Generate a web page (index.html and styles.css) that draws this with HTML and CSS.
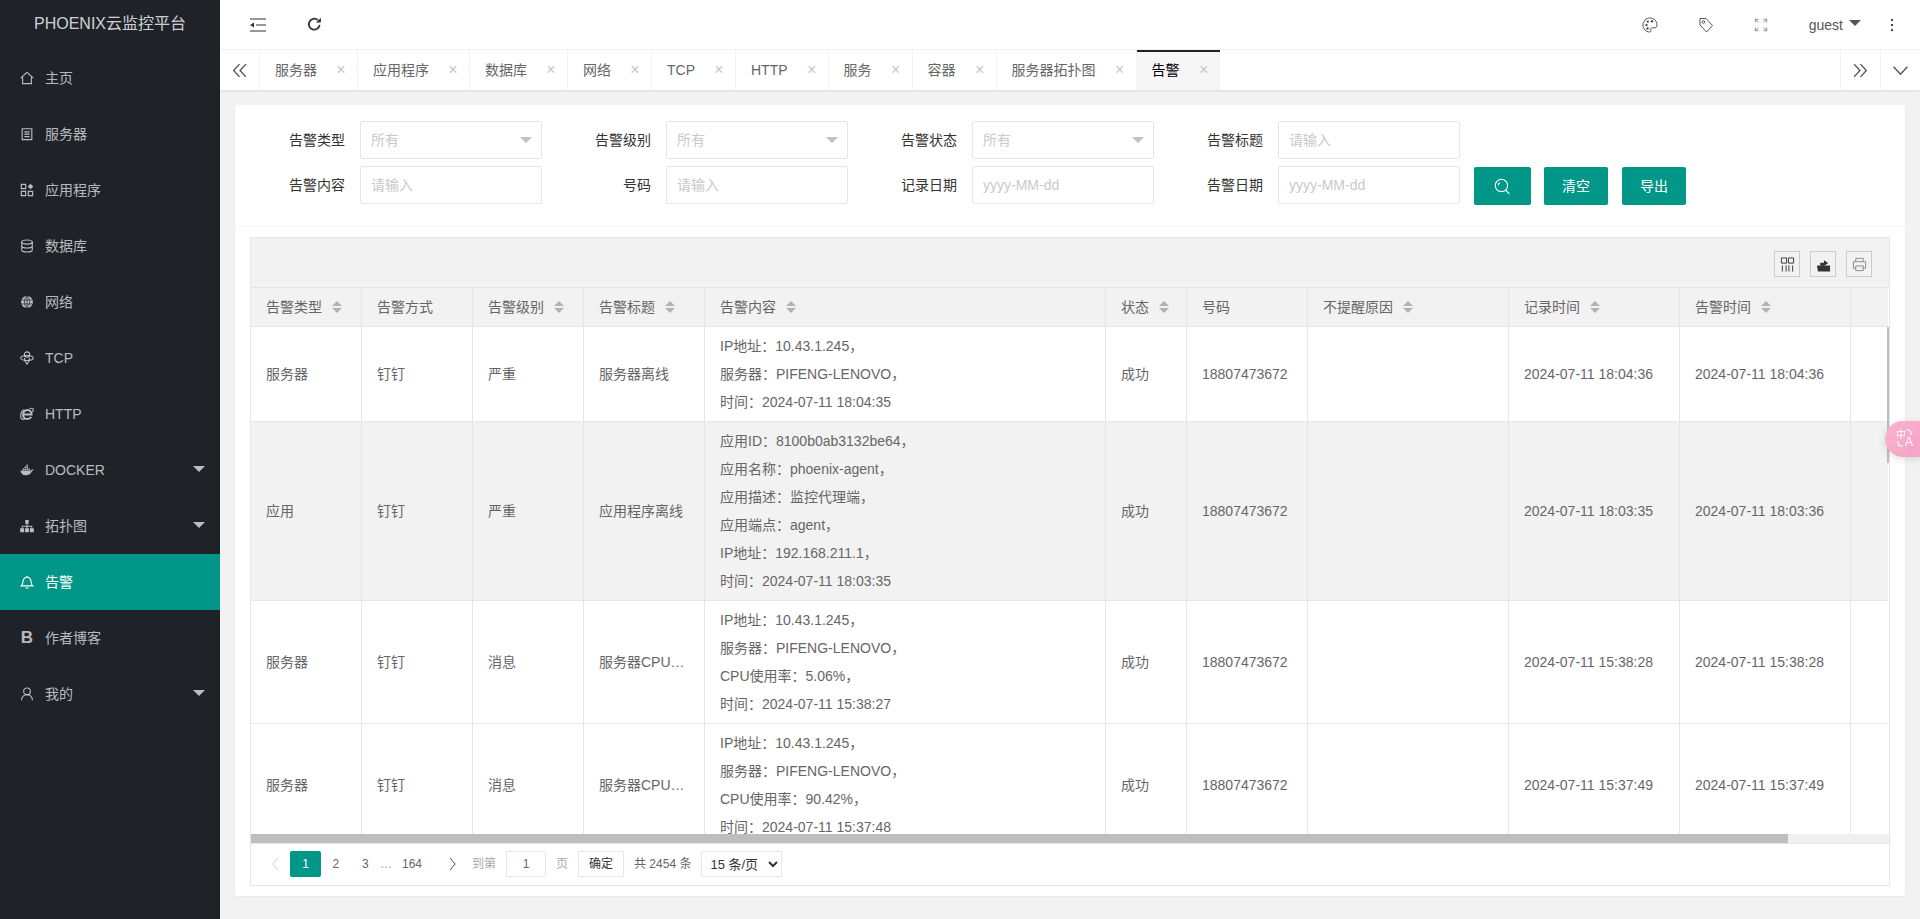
FILE: index.html
```html
<!DOCTYPE html>
<html lang="zh-CN">
<head>
<meta charset="utf-8">
<title>PHOENIX云监控平台</title>
<link rel="stylesheet" href="styles.css">
</head>
<body>
<div class="app">
  <aside class="side">
    <div class="logo">PHOENIX云监控平台</div>
    <nav class="menu">
      <a class="item"><svg class="ico" viewBox="0 0 16 16"><path d="M.8 8.2 8 1.5l7.2 6.7M3 7v7.5h10V7"/></svg><span>主页</span></a>
      <a class="item"><svg class="ico" viewBox="0 0 16 16"><path d="M2.500 2h11v12.500h-11zM5 5.500h6M5 8.200h6M5 11h6"/></svg><span>服务器</span></a>
      <a class="item"><svg class="ico" viewBox="0 0 16 16"><path d="M1.500 1.500h5v5h-5zM1.500 9.500h5v5h-5zM9.500 9.500h5v5h-5z"/><path class="fill" d="m12 .8 3.200 3.200-3.200 3.200L8.800 4z"/></svg><span>应用程序</span></a>
      <a class="item"><svg class="ico" viewBox="0 0 16 16"><ellipse cx="8" cy="3.500" rx="6" ry="2.300"/><path d="M2 3.500v9c0 1.300 2.700 2.300 6 2.300s6-1 6-2.300v-9M2 8c0 1.300 2.700 2.300 6 2.300s6-1 6-2.300"/></svg><span>数据库</span></a>
      <a class="item"><svg class="ico" viewBox="0 0 16 16"><circle class="fill" cx="8" cy="8" r="6.800"/><path class="cut" d="M1.500 5.800h13M1.500 10.200h13M8 1.200v13.600M8 1.200C4 5 4 11 8 14.800M8 1.200c4 3.800 4 9.800 0 13.600"/></svg><span>网络</span></a>
      <a class="item"><svg class="ico" viewBox="0 0 16 16"><ellipse cx="8" cy="8" rx="7.200" ry="2.800"/><circle cx="8" cy="4" r="3"/><path d="M5 8c0 3 1.500 5 3 7 1.500-2 3-4 3-7"/></svg><span>TCP</span></a>
      <a class="item"><svg class="ico" viewBox="0 0 16 16"><path class="bold" d="M3.800 8.600h9.400C13.200 5.500 11 3.500 8.500 3.500 5.500 3.500 3.500 6 3.500 8.800c0 3 2.300 5 5 5 2 0 3.500-1 4.300-2.500"/><path d="M5 2.800C2.500 3.800.6 7 .8 11c.2 3.500 3 4 6 2M11 2c2-1 4-.8 4.200 1 .1 1-.4 2-1 3"/></svg><span>HTTP</span></a>
      <a class="item"><svg class="ico" viewBox="0 0 16 16"><path class="fill" d="M.5 8.500h12c.5-1 1.500-1.500 3-1-.3 1-1 1.700-2 1.800-1 3-3.500 4.700-7 4.700-3.500 0-5.500-2-6-5.500zM3 6.300h1.700V8H3zM5.200 6.300h1.700V8H5.200zM7.400 6.300h1.700V8H7.400zM5.200 4.100h1.700v1.700H5.200zM7.400 4.100h1.700v1.700H7.400zM7.400 1.900h1.700v1.700H7.400zM9.600 6.300h1.700V8H9.600z"/></svg><span>DOCKER</span><i class="caret"></i></a>
      <a class="item"><svg class="ico" viewBox="0 0 16 16"><path class="fill" d="M6 1h4v4.500H8.600v2.200h5.400v3h1.800V15h-4.500v-4.300H13V8.800H8.600v1.900H10.200V15H5.800v-4.300h1.600V8.800H3v1.900h1.700V15H.2v-4.300H2V7.700h5.400V5.500H6z"/></svg><span>拓扑图</span><i class="caret"></i></a>
      <a class="item on"><svg class="ico" viewBox="0 0 16 16"><path d="M1.500 12.500h13c-1.300-1-1.800-2-1.800-4.500 0-3-2-5.500-4.700-5.500S3.300 5 3.300 8c0 2.500-.5 3.500-1.800 4.500zM6.300 14.800h3.400M8 1v1.500"/></svg><span>告警</span></a>
      <a class="item"><b class="ico-b">B</b><span>作者博客</span></a>
      <a class="item"><svg class="ico" viewBox="0 0 16 16"><circle cx="8" cy="5" r="3.800"/><path d="M1.800 15c0-4 2.500-6.200 6.200-6.200s6.200 2.200 6.200 6.200"/></svg><span>我的</span><i class="caret"></i></a>
    </nav>
  </aside>

  <div class="body">
    <header class="top">
      <svg class="tool tool-menu" viewBox="0 0 16 14"><path d="M0 1h16M6 7h10M0 13h16"/><path class="solid" d="M4 4.500v5L0 7z"/></svg>
      <svg class="tool tool-refresh" viewBox="0 0 16 16"><path d="M13.500 8.500A5.800 5.800 0 1 1 11.500 3.200"/><path class="solid" d="M9.500 5.800h5.300V.8z"/></svg>
      <div class="top-right">
        <svg class="tr-ico" viewBox="0 0 16 16"><path d="M8 1C4 1 1 4 1 8s3 7 6.500 7c1.500 0 1.700-1 1.200-2-.6-1.200.2-2.200 1.500-2.200H13c1.300 0 2-1 2-2.800C15 4 12 1 8 1z"/><circle class="solid" cx="4.500" cy="8" r="1.200"/><circle class="solid" cx="5.800" cy="4.600" r="1.200"/><circle class="solid" cx="10" cy="4.300" r="1.200"/><circle class="solid" cx="5.500" cy="11.500" r="1.200"/></svg>
        <svg class="tr-ico" viewBox="0 0 16 16"><path d="M2 1.500h6l6.500 7-6 6.500L2 8z"/><circle cx="5.500" cy="5" r="1.300"/></svg>
        <svg class="tr-ico tr-full" viewBox="0 0 16 16"><path d="M1.500 5V1.500H5M14.500 5V1.500H11M1.500 11v3.500H5M14.500 11v3.500H11M1.500 1.500l3.500 3.500M14.500 1.500 11 5M1.500 14.500 5 11M14.500 14.500 11 11"/></svg>
        <span class="guest">guest<i class="g-caret"></i></span>
        <span class="dots"><i></i><i></i><i></i></span>
      </div>
    </header>

    <div class="tabs">
      <button class="tab-btn tab-prev"><svg viewBox="0 0 16 16"><path d="M8 2 2.500 8 8 14M14 2 8.500 8l5.500 6"/></svg></button>
      <ul class="tab-list">
        <li>服务器<i class="x">×</i></li>
        <li>应用程序<i class="x">×</i></li>
        <li>数据库<i class="x">×</i></li>
        <li>网络<i class="x">×</i></li>
        <li>TCP<i class="x">×</i></li>
        <li>HTTP<i class="x">×</i></li>
        <li>服务<i class="x">×</i></li>
        <li>容器<i class="x">×</i></li>
        <li>服务器拓扑图<i class="x">×</i></li>
        <li class="cur">告警<i class="x">×</i></li>
      </ul>
      <button class="tab-btn tab-next"><svg viewBox="0 0 16 16"><path d="m2 2 5.500 6L2 14M8 2l5.500 6L8 14"/></svg></button>
      <button class="tab-btn tab-down"><svg viewBox="0 0 16 16"><path d="m1.500 4.500 6.500 7 6.500-7"/></svg></button>
    </div>

    <main class="main">
      <section class="card">
        <form class="filter">
          <div class="f-row">
            <div class="field"><label>告警类型</label><div class="ctrl"><input placeholder="所有" readonly><i class="sel"></i></div></div>
            <div class="field"><label>告警级别</label><div class="ctrl"><input placeholder="所有" readonly><i class="sel"></i></div></div>
            <div class="field"><label>告警状态</label><div class="ctrl"><input placeholder="所有" readonly><i class="sel"></i></div></div>
            <div class="field"><label>告警标题</label><div class="ctrl"><input placeholder="请输入"></div></div>
          </div>
          <div class="f-row">
            <div class="field"><label>告警内容</label><div class="ctrl"><input placeholder="请输入"></div></div>
            <div class="field"><label>号码</label><div class="ctrl"><input placeholder="请输入"></div></div>
            <div class="field"><label>记录日期</label><div class="ctrl"><input placeholder="yyyy-MM-dd"></div></div>
            <div class="field"><label>告警日期</label><div class="ctrl"><input placeholder="yyyy-MM-dd"></div></div>
            <div class="btns">
              <button type="button" class="btn btn-s"><svg viewBox="0 0 16 16"><circle cx="7" cy="7" r="5.800"/><path d="m11 11.500 3.500 3.500M4 7a3 3 0 0 1 1.500-2.600"/></svg></button>
              <button type="button" class="btn">清空</button>
              <button type="button" class="btn">导出</button>
            </div>
          </div>
        </form>

        <div class="grid">
          <div class="g-tool">
            <span class="g-ico"><svg viewBox="0 0 16 16"><path d="M1.500 1h5.500v5.500H1.500zM9 1h5.500v5.500H9zM2.500 9v6.500M6.500 9v6.500M9.500 9v6.500M13.500 9v6.500"/></svg></span>
            <span class="g-ico"><svg viewBox="0 0 16 16"><path class="solid" d="M1 9h14v6.500H2z"/><path class="solid" d="M4.500 9V6h4V3.500L13 6.500 8.500 9.500z"/></svg></span>
            <span class="g-ico g-print"><svg viewBox="0 0 16 16"><path d="M4 5V1.500h8V5M4 12H1.500V5h13v7H12M4 9.500h8v5H4z"/></svg></span>
          </div>
          <div class="g-view">
            <table class="tb">
              <thead>
                <tr>
                  <th>告警类型<i class="sort"></i></th><th>告警方式</th><th>告警级别<i class="sort"></i></th><th>告警标题<i class="sort"></i></th><th>告警内容<i class="sort"></i></th><th>状态<i class="sort"></i></th><th>号码</th><th>不提醒原因<i class="sort"></i></th><th>记录时间<i class="sort"></i></th><th>告警时间<i class="sort"></i></th><th></th>
                </tr>
              </thead>
              <tbody>
                <tr>
                  <td>服务器</td><td>钉钉</td><td>严重</td><td>服务器离线</td>
                  <td>IP地址：10.43.1.245，<br>服务器：PIFENG-LENOVO，<br>时间：2024-07-11 18:04:35</td>
                  <td>成功</td><td>18807473672</td><td></td><td>2024-07-11 18:04:36</td><td>2024-07-11 18:04:36</td><td></td>
                </tr>
                <tr class="hover">
                  <td>应用</td><td>钉钉</td><td>严重</td><td>应用程序离线</td>
                  <td>应用ID：8100b0ab3132be64，<br>应用名称：phoenix-agent，<br>应用描述：监控代理端，<br>应用端点：agent，<br>IP地址：192.168.211.1，<br>时间：2024-07-11 18:03:35</td>
                  <td>成功</td><td>18807473672</td><td></td><td>2024-07-11 18:03:35</td><td>2024-07-11 18:03:36</td><td></td>
                </tr>
                <tr>
                  <td>服务器</td><td>钉钉</td><td>消息</td><td>服务器CPU过载</td>
                  <td>IP地址：10.43.1.245，<br>服务器：PIFENG-LENOVO，<br>CPU使用率：5.06%，<br>时间：2024-07-11 15:38:27</td>
                  <td>成功</td><td>18807473672</td><td></td><td>2024-07-11 15:38:28</td><td>2024-07-11 15:38:28</td><td></td>
                </tr>
                <tr>
                  <td>服务器</td><td>钉钉</td><td>消息</td><td>服务器CPU过载</td>
                  <td>IP地址：10.43.1.245，<br>服务器：PIFENG-LENOVO，<br>CPU使用率：90.42%，<br>时间：2024-07-11 15:37:48</td>
                  <td>成功</td><td>18807473672</td><td></td><td>2024-07-11 15:37:49</td><td>2024-07-11 15:37:49</td><td></td>
                </tr>
              </tbody>
            </table>
            <i class="v-thumb"></i>
          </div>
          <div class="h-track"><i class="h-thumb"></i></div>
          <div class="pager">
            <span class="p-arrow p-prev"><svg viewBox="0 0 10 16"><path d="M8 1 2 8l6 7"/></svg></span>
            <span class="p-cur">1</span>
            <span class="p-n p-n2">2</span>
            <span class="p-n p-n3">3</span>
            <span class="p-dots">…</span>
            <span class="p-n p-last">164</span>
            <span class="p-arrow p-next"><svg viewBox="0 0 10 16"><path d="m2 1 6 7-6 7"/></svg></span>
            <span class="p-mute">到第</span>
            <input class="p-input" value="1">
            <span class="p-mute p-ye">页</span>
            <button type="button" class="p-ok">确定</button>
            <span class="p-total">共 2454 条</span>
            <select class="p-size"><option>15 条/页</option></select>
          </div>
        </div>
      </section>
    </main>
  </div>
</div>
<div class="trans"><svg viewBox="0 0 20 20"><path d="M11 2h2c1.500 0 3 1.500 3 3v2M3 13v2c0 1.500 1 3 3 3h2"/></svg><span class="t-zh">中</span><span class="t-a">A</span></div>
</body>
</html>
```

FILE: styles.css
```css
* { box-sizing: border-box; }
html, body { margin: 0; height: 100%; overflow: hidden; }
body { font: 14px/20px "Liberation Sans", "Noto Sans CJK SC", sans-serif; color: #666; background: #f2f2f2; }
i { font-style: normal; }
svg { fill: none; stroke: currentColor; stroke-width: 1.2; display: block; }
svg .fill, svg .solid { fill: currentColor; stroke: none; }

.app { display: flex; height: 919px; }

/* sidebar */
.side { width: 220px; flex: none; background: #20222a; color: rgba(255,255,255,.7); }
.logo { height: 50px; line-height: 48px; text-align: center; font-size: 16px; color: rgba(255,255,255,.8); }
.menu { display: flex; flex-direction: column; }
.item { height: 56px; display: flex; align-items: center; padding-left: 20px; position: relative; }
.item.on { background: #009688; color: #fff; }
.item span { margin-left: 11px; }
.ico { width: 14px; height: 14px; flex: none; stroke-width: 1.300; }
.ico .cut { stroke: #20222a; stroke-width: .8; }
.ico .bold { stroke-width: 2.300; }
.ico-b { width: 14px; flex: none; font-size: 17px; font-weight: 700; text-align: center; }
.caret { margin-left: auto; margin-right: 15px; width: 0; height: 0; border: 6px solid transparent; border-top-color: rgba(255,255,255,.7); border-bottom: 0; margin-top: -3px; }

/* header */
.body { flex: 1; min-width: 0; display: flex; flex-direction: column; }
.top { height: 50px; flex: none; background: #fff; display: flex; align-items: center; border-bottom: 1px solid #f0f0f0; color: #333; }
.tool { flex: none; }
.tool-menu { width: 16px; height: 14px; margin-left: 30px; }
.tool-refresh { width: 15px; height: 15px; margin-left: 41px; stroke-width: 1.900; }
.top-right { margin-left: auto; display: flex; align-items: center; color: #555; }
.tr-ico { width: 16px; height: 16px; flex: none; margin-right: 40px; stroke-width: 1; }
.tr-full { width: 14px; height: 14px; color: #777; margin-right: 41px; stroke-width: .9; }
.guest { display: flex; align-items: center; color: #555; }
.g-caret { margin-left: 6px; width: 0; height: 0; border: 6px solid transparent; border-top-color: #555; border-bottom: 0; margin-top: -4px; }
.dots { display: flex; flex-direction: column; gap: 3px; margin: 0 27px 0 30px; }
.dots i { width: 2px; height: 2px; background: #444; }

/* tabs */
.tabs { height: 40px; flex: none; display: flex; background: #fff; box-shadow: 0 1px 2px rgba(0,0,0,.1); position: relative; }
.tab-btn { flex: none; width: 40px; height: 40px; padding: 0; border: 0; background: #fff; display: flex; align-items: center; justify-content: center; color: #555; }
.tab-btn svg { width: 17px; height: 17px; stroke-width: 1.300; }
.tab-prev { border-right: 1px solid #f2f2f2; }
.tab-next { border-left: 1px solid #f2f2f2; }
.tab-down { border-left: 1px solid #f2f2f2; }
.tab-list { flex: 1; display: flex; list-style: none; margin: 0; padding: 0; }
.tab-list li { height: 40px; line-height: 38px; padding: 0 7px 0 15px; display: flex; align-items: center; border-right: 1px solid #f2f2f2; white-space: nowrap; color: #666; }
.tab-list .x { width: 18px; margin-left: 15px; text-align: center; font-size: 16px; color: #c8c8c8; }
.tab-list li.cur { background: #f6f6f6; color: #000; border-top: 2px solid #20222a; border-right: 0; padding-bottom: 2px; }

/* content */
.main { flex: 1; min-height: 0; padding: 15px 15px 23px; }
.card { height: 791px; background: #fff; border-radius: 2px; box-shadow: 0 1px 2px rgba(0,0,0,.05); display: flex; flex-direction: column; }
.filter { height: 122px; flex: none; padding: 16px 0 0 15px; border-bottom: 1px solid #f6f6f6; display: flex; flex-direction: column; gap: 7px; }
.f-row { display: flex; }
.field { display: flex; width: 306px; flex: none; }
.field label { width: 110px; flex: none; padding-right: 15px; line-height: 38px; text-align: right; color: #333; }
.ctrl { width: 182px; height: 38px; flex: none; position: relative; }
.ctrl input { width: 100%; height: 100%; padding: 0 10px; border: 1px solid #e6e6e6; border-radius: 2px; font: inherit; color: #666; background: #fff; outline: 0; }
.ctrl input::placeholder, .p-input::placeholder { color: #c9c9c9; opacity: 1; }
.sel { position: absolute; right: 10px; top: 16px; width: 0; height: 0; border: 6px solid transparent; border-top-color: #c2c2c2; border-bottom: 0; }
.btns { display: flex; gap: 13px; margin-top: 1px; }
.btn { height: 38px; width: 64px; padding: 0; border: 0; border-radius: 2px; background: #009688; color: #fff; font: inherit; display: flex; align-items: center; justify-content: center; }
.btn + .btn + .btn { margin-left: 1px; }
.btn-s { width: 57px; }
.btn-s svg { width: 17px; height: 17px; stroke-width: 1.100; }

/* data grid */
.grid { margin: 10px 15px 0; height: 649px; border: 1px solid #e6e6e6; display: flex; flex-direction: column; }
.g-tool { height: 50px; flex: none; background: #f2f2f2; display: flex; justify-content: flex-end; align-items: flex-start; gap: 10px; padding: 13px 17px 0 0; border-bottom: 1px solid #e6e6e6; }
.g-ico { width: 26px; height: 26px; border: 1px solid #ccc; display: flex; align-items: center; justify-content: center; color: #333; }
.g-ico svg { width: 15px; height: 15px; stroke-width: 1; }
.g-print { color: #888; }
.g-view { height: 546px; flex: none; overflow: hidden; position: relative; }
.tb { width: 1637px; table-layout: fixed; border-collapse: separate; border-spacing: 0; }
.tb th, .tb td { border-right: 1px solid #e6e6e6; border-bottom: 1px solid #e6e6e6; padding: 5px 15px; line-height: 28px; text-align: left; font-weight: 400; color: #666; white-space: nowrap; overflow: hidden; text-overflow: ellipsis; }
.tb th { height: 39px; background: #f2f2f2; padding-top: 0; padding-bottom: 0; line-height: 38px; }
.tb th:nth-child(1), .tb th:nth-child(2), .tb th:nth-child(3) { width: 111px; }
.tb th:nth-child(4), .tb th:nth-child(7) { width: 121px; }
.tb th:nth-child(5) { width: 401px; }
.tb th:nth-child(6) { width: 81px; }
.tb th:nth-child(8) { width: 201px; }
.tb th:nth-child(9) { width: 171px; }
.tb th:nth-child(10) { width: 171px; }
.tb th:nth-child(11) { width: 37px; border-right: 0; }
.tb td:last-child { border-right: 0; }
.tb tr.hover td { background: #f2f2f2; }
.sort { display: inline-block; vertical-align: middle; position: relative; width: 10px; height: 12px; margin: -2px 0 0 10px; }
.sort::before, .sort::after { content: ""; position: absolute; left: 0; border: 5px solid transparent; }
.sort::before { top: 0; border-top: 0; border-bottom-color: #b2b2b2; }
.sort::after { bottom: 0; border-bottom: 0; border-top-color: #b2b2b2; }
.v-thumb { position: absolute; right: 0; top: 39px; width: 2px; height: 136px; background: #bebebe; }
.h-track { height: 10px; flex: none; background: #f0f0f0; border-bottom: 1px solid #e6e6e6; }
.h-thumb { display: block; width: 1537px; height: 9px; background: #bebebe; }

/* pager */
.pager { flex: 1; display: flex; align-items: center; padding-left: 9px; padding-bottom: 1px; color: #666; font-size: 12px; }
.pager > span { flex: none; height: 26px; line-height: 26px; }
.p-arrow { width: 30px; display: flex; align-items: center; justify-content: center; color: #333; }
.p-arrow svg { width: 9px; height: 14px; stroke-width: 1; }
.p-prev { color: #c8c8c8; }
.p-next { width: 40px; }
.pager .p-cur { width: 31px; background: #009688; color: #fff; border-radius: 2px; text-align: center; }
.p-n { text-align: center; }
.p-n2, .p-n3 { width: 29.500px; }
.p-dots { width: 12px; text-align: center; color: #999; }
.p-last { width: 40px; }
.p-mute { color: #aaa; }
.p-input { width: 40px; height: 26px; margin-left: 10px; border: 1px solid #e6e6e6; border-radius: 2px; text-align: center; font: inherit; color: #666; outline: 0; padding: 0; }
.p-ye { margin-left: 10px; }
.p-ok { width: 46px; height: 26px; margin-left: 10px; padding: 0; background: #fff; border: 1px solid #e6e6e6; border-radius: 2px; font: inherit; line-height: 24px; color: #333; }
.p-total { margin-left: 10px; }
.p-size { width: 81px; height: 26px; margin-left: 10px; padding: 0 0 0 4px; background: #fff; border: 1px solid #e6e6e6; border-radius: 2px; font: inherit; font-size: 13px; color: #333; outline: 0; }

/* floating translate badge */
.trans { position: fixed; right: 0; top: 421px; width: 35px; height: 36px; border-radius: 18px 0 0 18px; background: linear-gradient(135deg, #f9b3cf, #f5a3c4); box-shadow: 0 2px 8px rgba(0,0,0,.12); color: #fff; }
.trans svg { position: absolute; left: 10px; top: 7px; width: 20px; height: 20px; stroke-width: 1.200; }
.trans span { position: absolute; line-height: 12px; }
.t-zh { left: 11px; top: 8px; font-size: 10px; }
.t-a { left: 20px; top: 15px; font-size: 12px; }
```
